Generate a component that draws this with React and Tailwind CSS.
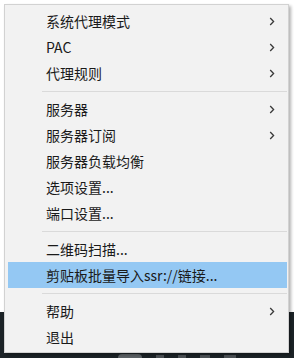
const Chevron = () => (
  <svg width="6" height="9" viewBox="0 0 6 9" className="shrink-0">
    <path d="M1.2 1 L4.6 4.5 L1.2 8" fill="none" stroke="#3a3a3a" strokeWidth="1.3" />
  </svg>
);

const Item = ({ label, sub, active }) => (
  <div
    className={
      active
        ? "h-[26px] flex items-center justify-between pl-[38px] pr-[12px] bg-[#94c8f3]"
        : "h-[26px] flex items-center justify-between pl-[38px] pr-[12px]"
    }
  >
    <span className="text-[14px] leading-none text-[#1a1a1a]">{label}</span>
    {sub && <Chevron />}
  </div>
);

const Sep = () => (
  <div className="h-[10px] pt-[5px] pl-[34px]">
    <div className="h-px bg-[#dadada]" />
  </div>
);

export default function App() {
  return (
    <div
      className="relative w-[294px] h-[358px] overflow-hidden flex flex-col bg-white"
      style={{ fontFamily: '"Noto Sans CJK SC", "Noto Sans", sans-serif' }}
    >
      <div className="h-[312px] bg-white" />
      <div className="flex-1 bg-[#1c2327] flex items-end gap-[14px] pl-[118px]">
        <div className="w-[24px] h-[4px] rounded-t bg-[#5d6367]" />
        <div className="w-[8px] h-[3px] bg-[#4d5357]" />
        <div className="w-[8px] h-[3px] bg-[#4d5357]" />
        <div className="w-[10px] h-[3px] bg-[#4d5357]" />
        <div className="w-[12px] h-[3px] bg-[#4d5357]" />
      </div>

      <div className="absolute left-[4px] top-[4px] w-[285px] border border-[#d2d2d2] bg-[#f2f2f2] pt-[3px] pb-[2px] pl-[3px] pr-[1px] shadow-[2px_2px_3px_rgba(0,0,0,0.3)]">
        <Item label="系统代理模式" sub />
        <Item label="PAC" sub />
        <Item label="代理规则" sub />
        <Sep />
        <Item label="服务器" sub />
        <Item label="服务器订阅" sub />
        <Item label="服务器负载均衡" />
        <Item label="选项设置..." />
        <Item label="端口设置..." />
        <Sep />
        <Item label="二维码扫描..." />
        <Item label="剪贴板批量导入ssr://链接..." active />
        <Sep />
        <Item label="帮助" sub />
        <Item label="退出" />
      </div>
    </div>
  );
}
